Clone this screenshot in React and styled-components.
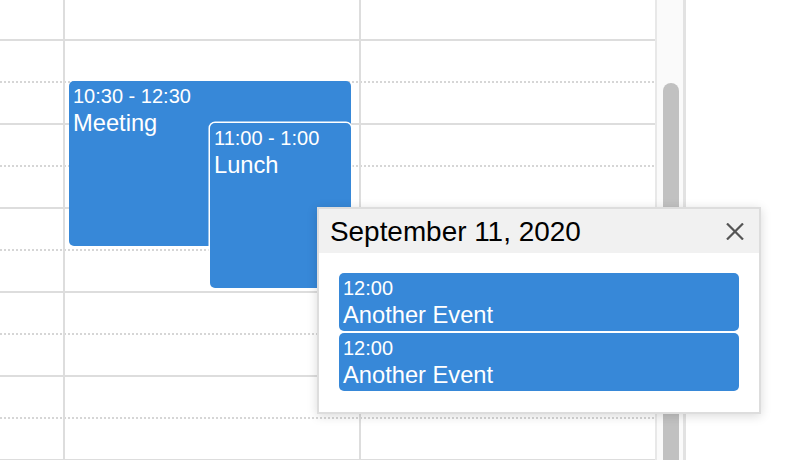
import styled, { createGlobalStyle } from 'styled-components';

const HOUR = 84;
const ORIGIN = 40; // y of 10:00
const yAt = (h) => ORIGIN + (h - 10) * HOUR;

const GlobalStyle = createGlobalStyle`
  html, body {
    margin: 0;
    padding: 0;
    background: #fff;
    overflow: hidden;
    font-family: "Liberation Sans", Arial, Helvetica, sans-serif;
  }
  * { box-sizing: border-box; }
`;

const Page = styled.div`
  position: relative;
  display: flex;
  height: 460px;
  overflow: hidden;
`;

const Calendar = styled.div`
  display: flex;
  width: 686px;
  height: 100%;
`;

const TimeGrid = styled.div`
  position: relative;
  width: 655px;
  height: 100%;
  overflow: hidden;
`;

const SlotList = styled.div`
  display: flex;
  flex-direction: column;
`;

const Slot = styled.div`
  flex-shrink: 0;
  height: ${({ $first }) => ($first ? 41 : 42)}px;
  border-bottom: ${({ $minor }) => ($minor ? 'none' : '2px solid #ddd')};
  background: ${({ $minor }) =>
    $minor
      ? 'repeating-linear-gradient(to right, #d6d6d6 0 2px, transparent 2px 4px) left bottom / 100% 2px no-repeat'
      : 'none'};
`;

const ColumnLayer = styled.div`
  position: absolute;
  inset: 0;
  display: grid;
  grid-template-columns: 65px 296px 1fr;
`;

const AxisCol = styled.div`
  border-right: 2px solid #ddd;
`;

const DayCol = styled.div`
  position: relative;
  border-right: ${({ $last }) => ($last ? 'none' : '2px solid #ddd')};
`;

const EventHarness = styled.div`
  position: absolute;
  top: 0;
  bottom: 0;
  left: 4px;
  right: 8px;
`;

const EventBox = styled.div`
  background: #3788d8;
  color: #fff;
  border-radius: 5px;
  padding: 4px 4px 2px;
  overflow: hidden;
`;

const TimeEvent = styled(EventBox)`
  position: absolute;
  right: 0;
  box-shadow: ${({ $stacked }) => ($stacked ? '0 0 0 1.5px #fff' : 'none')};
`;

const EventTime = styled.div`
  font-size: 20px;
  line-height: 23px;
  margin-bottom: 2px;
  white-space: nowrap;
`;

const EventTitle = styled.div`
  font-size: 23.7px;
  line-height: 27px;
  white-space: nowrap;
`;

const Scrollbar = styled.div`
  display: flex;
  width: 31px;
  height: 100%;
  padding: 83px 0 0 6px;
  background: #fafafa;
  border-left: 2px solid #e8e8e8;
  border-right: 3px solid #e2e2e2;
`;

const Thumb = styled.div`
  width: 16px;
  height: 420px;
  flex-shrink: 0;
  background: #c1c1c1;
  border-radius: 8px 8px 0 0;
`;

const Popover = styled.div`
  position: absolute;
  left: 317px;
  top: 207px;
  width: 444px;
  background: #fff;
  border: 2px solid #ddd;
  box-shadow: 0 2px 10px rgba(0, 0, 0, 0.15);
`;

const PopoverHeader = styled.div`
  display: flex;
  align-items: center;
  justify-content: space-between;
  height: 44px;
  padding: 1px 15px 0 11px;
  background: #f1f1f1;
`;

const PopoverTitle = styled.span`
  font-size: 27.9px;
  color: #000;
`;

const CloseButton = styled.button`
  display: flex;
  padding: 0;
  border: none;
  background: transparent;
  color: #555;
  cursor: pointer;
`;

const PopoverBody = styled.div`
  display: flex;
  flex-direction: column;
  gap: 2px;
  padding: 20px 20px 21px;
`;

const ListEvent = styled(EventBox)`
  height: 58px;
`;

const slots = Array.from({ length: 11 }, (_, i) => ({ first: i === 0, minor: i % 2 === 1 }));

const timedEvents = [
  { id: 1, time: '10:30 - 12:30', title: 'Meeting', start: 10.5, end: 12.5, left: '0%' },
  { id: 2, time: '11:00 - 1:00', title: 'Lunch', start: 11, end: 13, left: '50%', stacked: true },
];

const moreEvents = [
  { id: 3, time: '12:00', title: 'Another Event' },
  { id: 4, time: '12:00', title: 'Another Event' },
];

const CloseIcon = () => (
  <svg width="18" height="17" viewBox="0 0 18 17" fill="none" stroke="currentColor" strokeWidth="2.2">
    <path d="M1 0.5 L17 16.5 M17 0.5 L1 16.5" />
  </svg>
);

export default function App() {
  return (
    <Page>
      <GlobalStyle />
      <Calendar>
        <TimeGrid>
          <SlotList>
            {slots.map((s, i) => (
              <Slot key={i} $first={s.first} $minor={s.minor} />
            ))}
          </SlotList>
          <ColumnLayer>
            <AxisCol />
            <DayCol>
              <EventHarness>
                {timedEvents.map((ev) => (
                  <TimeEvent
                    key={ev.id}
                    $stacked={ev.stacked}
                    style={{
                      top: yAt(ev.start) - 1,
                      height: (ev.end - ev.start) * HOUR - 3,
                      left: ev.left,
                    }}
                  >
                    <EventTime>{ev.time}</EventTime>
                    <EventTitle>{ev.title}</EventTitle>
                  </TimeEvent>
                ))}
              </EventHarness>
            </DayCol>
            <DayCol $last />
          </ColumnLayer>
        </TimeGrid>
        <Scrollbar>
          <Thumb />
        </Scrollbar>
      </Calendar>

      <Popover>
        <PopoverHeader>
          <PopoverTitle>September 11, 2020</PopoverTitle>
          <CloseButton aria-label="Close">
            <CloseIcon />
          </CloseButton>
        </PopoverHeader>
        <PopoverBody>
          {moreEvents.map((ev) => (
            <ListEvent key={ev.id}>
              <EventTime>{ev.time}</EventTime>
              <EventTitle>{ev.title}</EventTitle>
            </ListEvent>
          ))}
        </PopoverBody>
      </Popover>
    </Page>
  );
}
